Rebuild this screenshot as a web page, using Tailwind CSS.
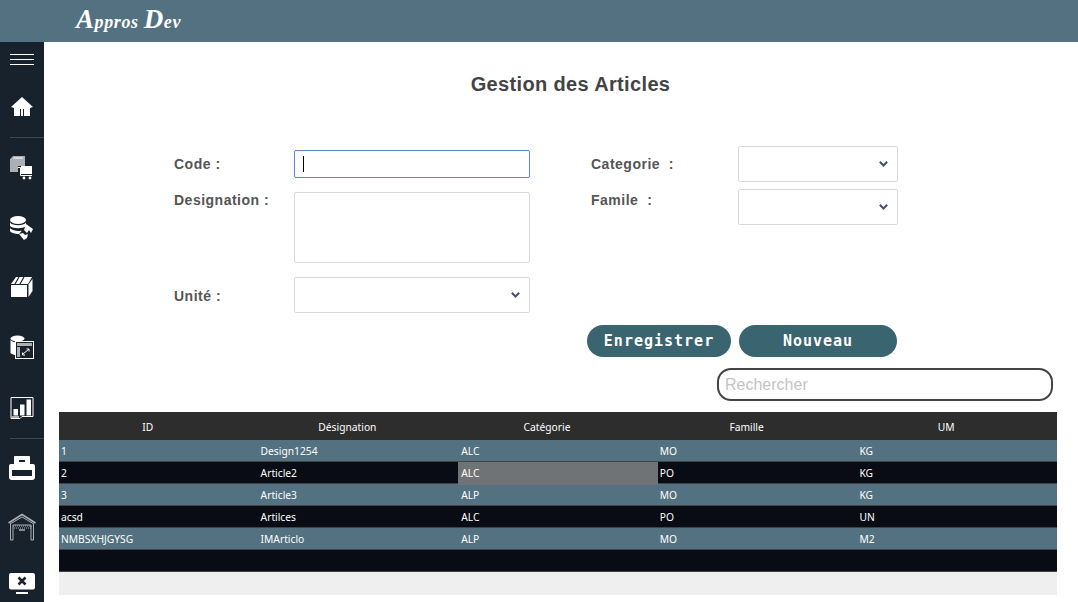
<!DOCTYPE html>
<html lang="en">
<head>
  <meta charset="UTF-8">
  <script src="https://cdn.jsdelivr.net/npm/@tailwindcss/browser@4"></script>
  <title>Gestion des Articles</title>
</head>
<body class="h-[602px] w-[1078px] overflow-hidden bg-white font-['Liberation_Sans',sans-serif]">
  <!-- top bar -->
  <header class="flex h-[42px] items-center bg-[#537181] pb-[3px] pl-[76px]">
    <span class="font-['Liberation_Serif',serif] text-[18px] font-bold italic leading-none tracking-[0.6px] text-white"><span class="text-[27px]">A</span>ppros <span class="text-[27px]">D</span>ev</span>
  </header>

  <div class="flex h-[560px]">
    <!-- side menu -->
    <aside class="flex w-[44px] flex-col bg-[#17222d]">
      <div class="flex h-[36px] flex-col items-center gap-[4px] pt-[12px]">
        <span class="h-[1px] w-[24px] bg-white"></span>
        <span class="h-[1px] w-[24px] bg-white"></span>
        <span class="h-[1px] w-[24px] bg-white"></span>
      </div>
      <div class="flex h-[59px] items-center justify-center pb-[1px]">
        <svg class="h-[20px] w-[22px]" viewBox="0 0 22 20" fill="#fff"><path d="M11 0 L22 10 L19 11 L19 19 L13 19 L13 12 L12 12 L12 19 L10 19 L10 12 L9 12 L9 19 L3 19 L3 11 L0 10 Z"/></svg>
      </div>
      <div class="ml-[10px] h-[1px] bg-[#3a4651]"></div>
      <div class="flex h-[60px] items-center justify-center">
        <svg class="h-[24px] w-[24px]" viewBox="0 0 24 24"><path d="M0 3 L3 0 L15 0 L15 10 L8 10 L8 16 L0 16 Z" fill="#a9afb3"/><path d="M3 3 H13 V1 H4 Z" fill="#d5d8da"/><rect x="11" y="10" width="11" height="8" fill="#fff"/><path d="M8 11.500 H10.500 V19.500 H22" fill="none" stroke="#fff"/><circle cx="14" cy="22" r="1.400" fill="#fff"/><circle cx="20" cy="22" r="1.400" fill="#fff"/></svg>
      </div>
      <div class="flex h-[58px] items-center justify-center pt-[2px]">
        <svg class="h-[26px] w-[26px]" viewBox="0 0 26 26" fill="#fff"><ellipse cx="9" cy="5" rx="8" ry="4"/><path d="M1 7.500 C3 11 15 11 17 7.500 V11 C14 14 4 14 1 11 Z"/><path d="M1 13 C3 16 11 16.500 13 15.500 L10 19 C6 19 2 18 1 16 Z"/><path d="M17 9 L24 14 L22 18 L20 15 L18 18 L15 15 Z"/><path d="M15 25 L10 19 L14 18 L16 20 L19 19 L18 23 Z"/></svg>
      </div>
      <div class="flex h-[62px] items-center justify-center">
        <svg class="h-[22px] w-[22px]" viewBox="0 0 22 22" fill="#fff"><path d="M5 1 H21 L17 8 H0 Z"/><path d="M8 1 L4 8 M13 1 L9 8" stroke="#17222d" stroke-width="1.200"/><path d="M0 9 H16 V21 H0 Z"/><path d="M17.500 8.500 L21.500 3 V15 L17.500 21 Z"/></svg>
      </div>
      <div class="flex h-[58px] items-center justify-center">
        <svg class="h-[24px] w-[24px]" viewBox="0 0 24 24"><ellipse cx="7.500" cy="3.500" rx="7" ry="3" fill="#fff"/><path d="M0.500 5 V18 C2 19.500 5 20 5 20 V6 H13 V5.500 C10 8 3 8 0.500 5 Z" fill="#fff"/><rect x="5.500" y="6.500" width="18" height="17" fill="#17222d" stroke="#fff"/><rect x="7" y="8" width="15" height="3" fill="#a9afb3"/><rect x="7" y="12" width="3" height="10" fill="#a9afb3"/><path d="M13 19 L19 14 M19 14 H16.500 M19 14 V16.500 M12.500 20 H15 M12.500 20 V17.500" stroke="#fff" fill="none"/></svg>
      </div>
      <div class="flex h-[62px] items-center justify-center pt-[2px]">
        <svg class="h-[24px] w-[24px]" viewBox="0 0 24 24"><path d="M1 1.500 H23 V20.500 H12 L10 22.500 H1 Z" fill="none" stroke="#fff"/><path d="M1 21 H9" stroke="#a9afb3" stroke-width="2"/><rect x="3.500" y="13" width="4.500" height="6.500" fill="#fff"/><rect x="10" y="8.500" width="4.500" height="11" fill="#fff"/><rect x="16.500" y="3.500" width="4.500" height="16" fill="#fff"/></svg>
      </div>
      <div class="ml-[10px] h-[1px] bg-[#3a4651]"></div>
      <div class="flex h-[60px] items-center justify-center pb-[3px]">
        <svg class="h-[24px] w-[28px]" viewBox="0 0 28 24" fill="#fff" fill-rule="evenodd"><path d="M6 1 C6 0.500 6.500 0 7 0 H21 C21.500 0 22 0.500 22 1 V8 H25 C26.500 8 27 9 27 10 V21 C27 23 26 24 24 24 H4 C2 24 1 23 1 21 V10 C1 9 1.500 8 3 8 H6 Z M11 4 V6 H17 V4 Z M4 14 V20 H24 V14 Z"/></svg>
      </div>
      <div class="flex h-[56px] items-center justify-center">
        <svg class="h-[28px] w-[28px]" viewBox="0 0 28 28" fill="none" stroke="#a9afb3"><path d="M0.500 10 L14 1.500 L27.500 10" stroke-width="1.500"/><path d="M2 11 L14 4 L26 11"/><path d="M2.500 11 V27 H5 V12 H23 V27 H25.500 V11"/><path d="M5 13 H23 V15 H5" stroke-dasharray="1 1"/><path d="M11 17 H17" stroke-width="1.500"/></svg>
      </div>
      <div class="flex flex-1 justify-center pt-[18px]">
        <svg class="h-[21px] w-[26px]" viewBox="0 0 26 21"><rect x="0" y="0" width="26" height="16.500" rx="2" fill="#fff"/><path d="M9.500 4.500 L16.500 11.500 M16.500 4.500 L9.500 11.500" stroke="#17222d" stroke-width="2.500"/><rect x="7" y="19" width="12" height="2" fill="#fff"/></svg>
      </div>
    </aside>

    <!-- main -->
    <main class="min-w-0 flex-1">
      <h1 class="pl-[19px] pt-[30px] text-center text-[20px] font-bold leading-[24px] tracking-[0.35px] text-[#444]">Gestion des Articles</h1>

      <form class="mt-[54px] flex pl-[130px]">
        <div class="w-[417px]">
          <div class="flex h-[28px] items-center">
            <label class="w-[120px] text-[14px] font-bold tracking-[0.5px] text-[#555]">Code :</label>
            <div class="flex h-[28px] w-[236px] items-center rounded-[2px] border border-[#5b86c8] pl-[8px]"><span class="h-[16px] w-[1px] bg-black"></span></div>
          </div>
          <div class="mt-[14px] flex">
            <label class="w-[120px] text-[14px] font-bold leading-[16px] tracking-[0.5px] text-[#555]">Designation :</label>
            <div class="h-[71px] w-[236px] rounded-[2px] border border-[#d6d9dd]"></div>
          </div>
          <div class="mt-[14px] flex h-[36px] items-center">
            <label class="w-[120px] pt-[3px] text-[14px] font-bold tracking-[0.5px] text-[#555]">Unité :</label>
            <div class="flex h-[36px] w-[236px] items-center justify-end rounded-[2px] border border-[#d6d9dd] pr-[9px]">
              <svg class="h-[6px] w-[9px]" viewBox="0 0 9 6" fill="none" stroke="#3f5168" stroke-width="2"><path d="M0.800 0.800 L4.500 4.500 L8.200 0.800"/></svg>
            </div>
          </div>
        </div>
        <div class="-mt-[4px]">
          <div class="flex h-[36px] items-center">
            <label class="w-[147px] text-[14px] font-bold tracking-[0.5px] text-[#555]">Categorie&nbsp; :</label>
            <div class="flex h-[36px] w-[160px] items-center justify-end rounded-[2px] border border-[#d6d9dd] pr-[9px]">
              <svg class="h-[6px] w-[9px]" viewBox="0 0 9 6" fill="none" stroke="#3f5168" stroke-width="2"><path d="M0.800 0.800 L4.500 4.500 L8.200 0.800"/></svg>
            </div>
          </div>
          <div class="mt-[7px] flex">
            <label class="w-[147px] pt-[3px] text-[14px] font-bold leading-[16px] tracking-[0.5px] text-[#555]">Famile&nbsp; :</label>
            <div class="flex h-[36px] w-[160px] items-center justify-end rounded-[2px] border border-[#d6d9dd] pr-[9px]">
              <svg class="h-[6px] w-[9px]" viewBox="0 0 9 6" fill="none" stroke="#3f5168" stroke-width="2"><path d="M0.800 0.800 L4.500 4.500 L8.200 0.800"/></svg>
            </div>
          </div>
        </div>
      </form>

      <div class="mt-[12px] flex gap-[8px] pl-[543px]">
        <button class="h-[32px] w-[144px] rounded-full bg-[#3b6471] font-['DejaVu_Sans_Mono',monospace] text-[15px] font-bold tracking-[1px] text-white">Enregistrer</button>
        <button class="h-[32px] w-[158px] rounded-full bg-[#3b6471] font-['DejaVu_Sans_Mono',monospace] text-[15px] font-bold tracking-[1px] text-white">Nouveau</button>
      </div>

      <div class="mt-[11px] pl-[673px]">
        <div class="flex h-[33px] w-[336px] items-center rounded-[14px] border-2 border-[#444] pl-[6px] text-[16px] text-[#c4c4c4]">Rechercher</div>
      </div>

      <!-- articles grid -->
      <div class="ml-[15px] mt-[11px] w-[998px] font-['Noto_Sans',sans-serif] text-[10.250px] text-white">
        <div class="grid h-[28px] grid-cols-5 items-center bg-[#2d2d2d] pt-[3px] text-center">
          <div class="pr-[22px]">ID</div><div class="pr-[22px]">Désignation</div><div class="pr-[22px]">Catégorie</div><div class="pr-[22px]">Famille</div><div class="pr-[22px]">UM</div>
        </div>
        <div class="grid h-[22px] grid-cols-5 border-b border-[#444] bg-[#537181] leading-[23px]">
          <div class="pl-[2px]">1</div><div class="pl-[2px]">Design1254</div><div class="pl-[3px]">ALC</div><div class="pl-[2px]">MO</div><div class="pl-[2px]">KG</div>
        </div>
        <div class="grid h-[22px] grid-cols-5 border-b border-[#444] bg-[#090c14] leading-[23px]">
          <div class="pl-[2px]">2</div><div class="pl-[2px]">Article2</div><div class="bg-[#707375] pl-[3px]">ALC</div><div class="pl-[2px]">PO</div><div class="pl-[2px]">KG</div>
        </div>
        <div class="grid h-[22px] grid-cols-5 border-b border-[#444] bg-[#537181] leading-[23px]">
          <div class="pl-[2px]">3</div><div class="pl-[2px]">Article3</div><div class="pl-[3px]">ALP</div><div class="pl-[2px]">MO</div><div class="pl-[2px]">KG</div>
        </div>
        <div class="grid h-[22px] grid-cols-5 border-b border-[#444] bg-[#090c14] leading-[23px]">
          <div class="pl-[2px]">acsd</div><div class="pl-[2px]">Artilces</div><div class="pl-[3px]">ALC</div><div class="pl-[2px]">PO</div><div class="pl-[2px]">UN</div>
        </div>
        <div class="grid h-[22px] grid-cols-5 border-b border-[#444] bg-[#537181] leading-[23px]">
          <div class="pl-[2px]">NMBSXHJGYSG</div><div class="pl-[2px]">IMArticlo</div><div class="pl-[3px]">ALP</div><div class="pl-[2px]">MO</div><div class="pl-[2px]">M2</div>
        </div>
        <div class="h-[22px] border-b border-[#444] bg-[#090c14]"></div>
        <div class="h-[23px] bg-[#efefef]"></div>
      </div>
    </main>
  </div>
</body>
</html>
